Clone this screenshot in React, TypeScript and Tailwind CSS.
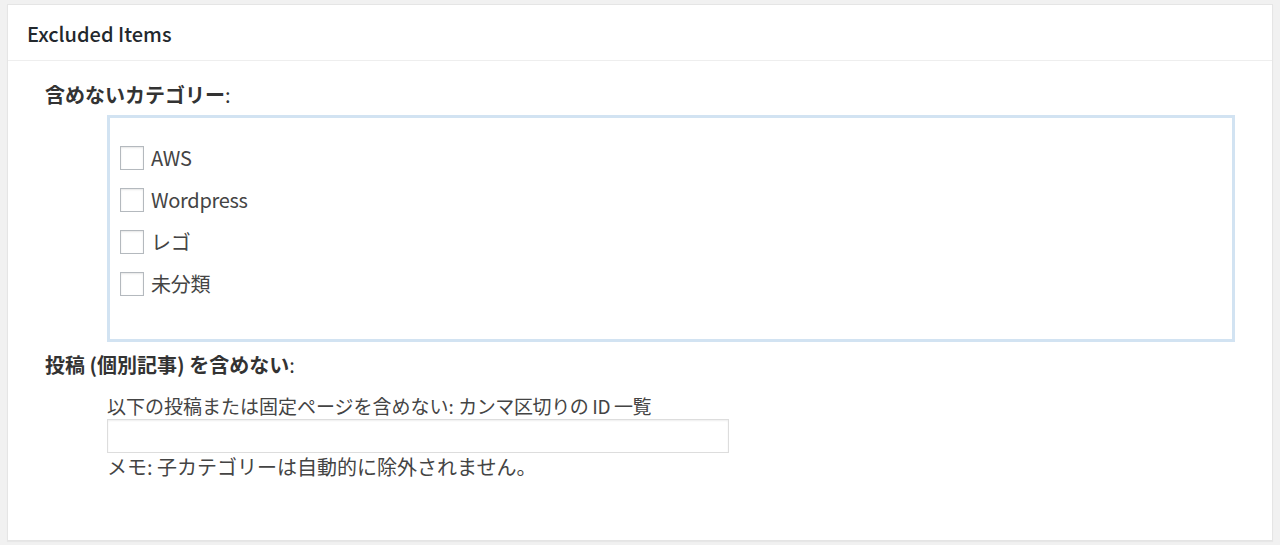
import { useState } from 'react'

const categories = ['AWS', 'Wordpress', 'レゴ', '未分類']

const font = { fontFamily: '"Noto Sans CJK JP", "Noto Sans", sans-serif' }

export default function App() {
  const [checked, setChecked] = useState<Record<string, boolean>>({})
  const [ids, setIds] = useState('')

  return (
    <div className="w-[1280px] h-[545px] bg-[#f1f1f1] pt-[4px] pl-[7px]" style={font}>
      <div className="w-[1266px] h-[537px] bg-white border border-[#e5e5e5] shadow-[0_1px_1px_rgba(0,0,0,0.04)]">
        {/* Header */}
        <div className="h-[56px] border-b border-[#eeeeee] flex items-center pl-[19px] pt-[2px]">
          <h2 className="text-[20px] font-medium text-[#23282d]">Excluded Items</h2>
        </div>

        <div className="pl-[37px] pt-[21px]">
          <div className="text-[20px] font-bold text-[#333] leading-[26px]">
            含めないカテゴリー<span className="font-normal">:</span>
          </div>

          <div className="ml-[62px] mt-[7px] w-[1128px] h-[227px] border-[3px] border-[#d2e3f2] pt-[27px] pl-[10px] flex flex-col gap-[17px]">
            {categories.map((c) => (
              <label key={c} className="flex items-center gap-[7px] cursor-pointer h-[25px]">
                <input
                  type="checkbox"
                  checked={!!checked[c]}
                  onChange={(e) => setChecked({ ...checked, [c]: e.target.checked })}
                  className="appearance-none w-[24px] h-[24px] border border-[#b4b9be] bg-white shadow-[inset_0_1px_2px_rgba(0,0,0,0.1)] checked:bg-[#1e8cbe]"
                />
                <span className="text-[20px] text-[#444] leading-[25px] tracking-[-0.3px]">{c}</span>
              </label>
            ))}
          </div>

          <div className="mt-[10px] text-[20px] font-bold text-[#333] leading-[26px]">
            投稿 (個別記事) を含めない<span className="font-normal">:</span>
          </div>

          <div className="ml-[62px] mt-[16px]">
            <div className="text-[19px] text-[#444] leading-[24px]">
              以下の投稿または固定ページを含めない: <span className="text-[19px] tracking-[-0.4px]">カンマ区切りの ID 一覧</span>
            </div>
            <input
              type="text"
              value={ids}
              onChange={(e) => setIds(e.target.value)}
              className="mt-[1px] w-[622px] h-[34px] border border-[#dddddd] shadow-[inset_0_1px_2px_rgba(0,0,0,0.07)] outline-none px-2 text-[16px]"
            />
            <div className="mt-[1px] text-[20px] text-[#444] leading-[26px]">
              メモ: 子カテゴリーは自動的に除外されません。
            </div>
          </div>
        </div>
      </div>
    </div>
  )
}
